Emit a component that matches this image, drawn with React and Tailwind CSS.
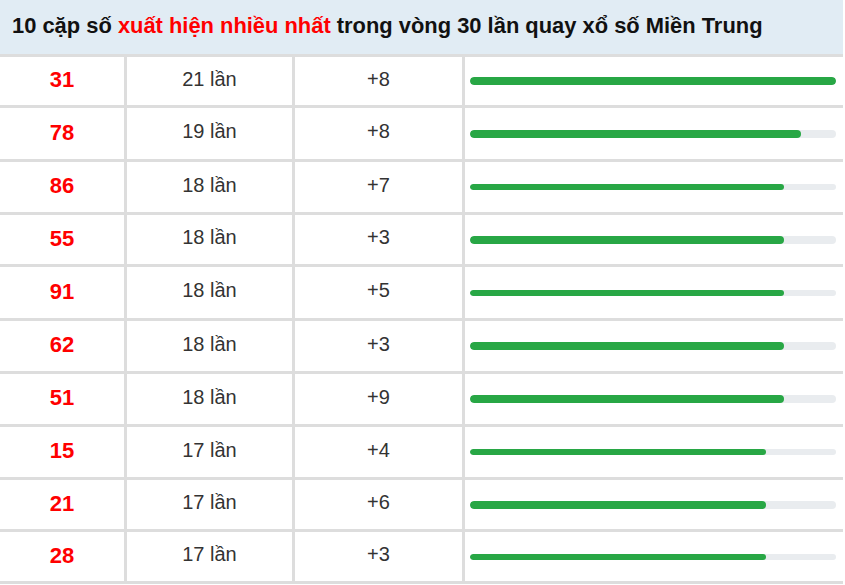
const rows = [
  { num: "31", count: 21, diff: "+8", h: "h-[51px]", thick: true },
  { num: "78", count: 19, diff: "+8", h: "h-[54px]", thick: true },
  { num: "86", count: 18, diff: "+7", h: "h-[53px]", thick: false },
  { num: "55", count: 18, diff: "+3", h: "h-[52px]", thick: true },
  { num: "91", count: 18, diff: "+5", h: "h-[54px]", thick: false },
  { num: "62", count: 18, diff: "+3", h: "h-[53px]", thick: true },
  { num: "51", count: 18, diff: "+9", h: "h-[53px]", thick: true },
  { num: "15", count: 17, diff: "+4", h: "h-[53px]", thick: false },
  { num: "21", count: 17, diff: "+6", h: "h-[52px]", thick: true },
  { num: "28", count: 17, diff: "+3", h: "h-[52px]", thick: false },
];

const MAX = 21;

function Row({ row }) {
  return (
    <div className={`flex ${row.h} border-b-[3px] border-[#dddddd]`}>
      <div className="w-[124px] flex items-center justify-center pb-[3px] text-[22px] font-bold text-[#ff0000]">
        {row.num}
      </div>
      <div className="w-[168px] border-l-[3px] border-[#dddddd] flex items-center justify-center pb-[5px] text-[20px] text-[#333333]">
        {row.count} lần
      </div>
      <div className="w-[170px] border-l-[3px] border-[#dddddd] flex items-center justify-center pb-[5px] text-[20px] text-[#333333]">
        {row.diff}
      </div>
      <div className="flex-1 border-l-[3px] border-[#dddddd] flex items-center pl-[5px] pr-[7px]">
        <div
          className={`w-full ${
            row.thick ? "h-[8px]" : "h-[6px]"
          } rounded-full bg-[#e9ecef] overflow-hidden`}
        >
          <div
            className="h-full rounded-full bg-[#28a745]"
            style={{ width: `${(row.count / MAX) * 100}%` }}
          />
        </div>
      </div>
    </div>
  );
}

export default function App() {
  return (
    <div className="w-[845px] h-[585px] bg-white font-['Liberation_Sans',Arial,sans-serif] overflow-hidden">
      <div className="w-[843px]">
        {/* Title bar */}
        <div className="h-[57px] bg-[#e1ecf4] border-b-[3px] border-[#dddddd] flex items-center pl-[12px] pb-[1px]">
          <h2 className="text-[21.9px] font-bold text-[#111111] whitespace-nowrap">
            10 cặp số <span className="text-[#ff0000]">xuất hiện nhiều nhất</span>{" "}
            trong vòng 30 lần quay xổ số Miền Trung
          </h2>
        </div>

        {rows.map((r) => (
          <Row key={r.num} row={r} />
        ))}
      </div>
    </div>
  );
}
